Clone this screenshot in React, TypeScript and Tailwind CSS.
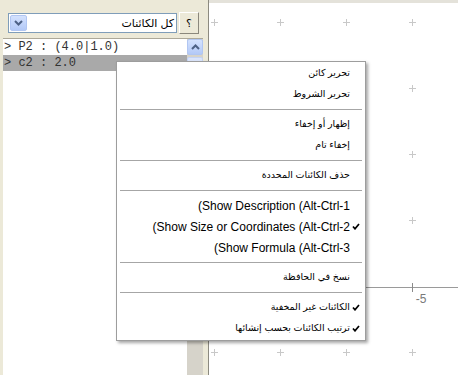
import React from 'react'

type Entry =
  | { kind: 'item'; label: string; check?: boolean; ar?: boolean }
  | { kind: 'sep' }

const menu: Entry[] = [
  { kind: 'item', label: 'تحرير كائن', ar: true },
  { kind: 'item', label: 'تحرير الشروط', ar: true },
  { kind: 'sep' },
  { kind: 'item', label: 'إظهار أو إخفاء', ar: true },
  { kind: 'item', label: 'إخفاء تام', ar: true },
  { kind: 'sep' },
  { kind: 'item', label: 'حذف الكائنات المحددة', ar: true },
  { kind: 'sep' },
  { kind: 'item', label: '(Show Description (Alt-Ctrl-1' },
  { kind: 'item', label: '(Show Size or Coordinates (Alt-Ctrl-2', check: true },
  { kind: 'item', label: '(Show Formula (Alt-Ctrl-3' },
  { kind: 'sep' },
  { kind: 'item', label: 'نسخ في الحافظة', ar: true },
  { kind: 'sep' },
  { kind: 'item', label: 'الكائنات غير المخفية', ar: true, check: true },
  { kind: 'item', label: 'ترتيب الكائنات بحسب إنشائها', ar: true, check: true },
]

const gridX = [5, 71, 137, 203]
const gridY = [19, 85, 151, 217, 349]

function Check() {
  return (
    <svg width="8" height="7" viewBox="0 0 8 7">
      <path d="M1 3.5 L3 5.8 L7 1" fill="none" stroke="#000" strokeWidth="1.7" />
    </svg>
  )
}

function Chevron({ up }: { up?: boolean }) {
  return (
    <svg width="9" height="6" viewBox="0 0 9 6">
      <path
        d={up ? 'M1 5 L4.5 1.5 L8 5' : 'M1 1 L4.5 4.5 L8 1'}
        fill="none"
        stroke="#4d6185"
        strokeWidth="2"
      />
    </svg>
  )
}

export default function App() {
  return (
    <div className="relative flex h-[375px] w-[458px] overflow-hidden bg-white font-['Liberation_Sans','DejaVu_Sans',sans-serif] text-black">
      {/* algebra view */}
      <div className="flex w-[203px] flex-col bg-[#ece9d8]">
        <div className="flex h-[38px] items-start gap-[2px] pl-[8px] pt-[12px]">
          <div className="mt-[1px] flex h-[20px] w-[169px] items-center border border-[#7f9db9] bg-white">
            <div className="ml-[1px] flex h-[16px] w-[17px] items-center justify-center rounded-[2px] border border-[#b1c6f2] bg-gradient-to-b from-[#d4e2fe] to-[#b3c9f7]">
              <Chevron />
            </div>
            <span dir="rtl" className="ml-auto pr-[2px] text-[11px] leading-none">
              كل الكائنات
            </span>
          </div>
          <div className="flex h-[22px] w-[20px] items-center justify-center border border-[#8a877c] border-l-white border-t-white bg-[#ece9d8] text-[11px]">
            ؟
          </div>
        </div>
        <div className="ml-[3px] flex flex-1 border-t border-[#aca899] bg-white">
          <div className="flex-1 font-['Liberation_Mono',monospace] text-[12px] leading-[16px] text-[#333]">
            <div className="h-[16px] pl-[1px]">&gt; P2 : (4.0|1.0)</div>
            <div className="h-[16px] bg-[#a9a9a9] pl-[1px]">&gt; c2 : 2.0</div>
          </div>
          <div className="flex w-[16px] flex-col bg-[#d6d3ca]">
            <div className="flex h-[16px] items-center justify-center rounded-[2px] border border-[#b1c6f2] bg-gradient-to-b from-[#d4e2fe] to-[#b3c9f7]">
              <Chevron up />
            </div>
            <div className="mt-[2px] h-[40px] rounded-[2px] border border-[#c3d3f5] bg-[#dbe5fb]" />
          </div>
        </div>
      </div>

      {/* splitter */}
      <div className="w-[6px] border-r border-[#8c8a80] bg-[#ece9d8]" />

      {/* graphics view */}
      <div className="flex-1 border-t-[3px] border-[#e4e2da]">
        <svg width="249" height="372" className="block">
          {gridX.map((x) =>
            gridY.map((y) => (
              <g key={`${x}-${y}`} stroke="#c8c8c8" strokeWidth="1">
                <line x1={x - 3} y1={y + 0.5} x2={x + 4} y2={y + 0.5} />
                <line x1={x + 0.5} y1={y - 3} x2={x + 0.5} y2={y + 4} />
              </g>
            ))
          )}
          <line x1="0" y1="284.5" x2="249" y2="284.5" stroke="#9a9a9a" strokeWidth="1" />
          <line x1="203.5" y1="280" x2="203.5" y2="289" stroke="#8a8a8a" strokeWidth="1" />
          <text x="212" y="300" fontSize="12" fill="#7a7a7a" textAnchor="middle" fontFamily="Liberation Sans, sans-serif">
            -5
          </text>
        </svg>
      </div>

      {/* context menu */}
      <div className="absolute left-[116px] top-[61px] w-[250px] border border-[#9d9d9d] bg-white py-[1px] shadow-[2px_2px_3px_rgba(0,0,0,0.35)]">
        {menu.map((e, i) =>
          e.kind === 'sep' ? (
            <div key={i} className="flex h-[9px] items-center px-[3px]">
              <div className="h-px w-full bg-[#a6a6a6]" />
            </div>
          ) : (
            <div key={i} className="flex h-[21px] items-center justify-end">
              <span dir={e.ar ? 'rtl' : 'ltr'} className={e.ar ? 'text-[9.5px]' : 'text-[12px]'}>
                {e.label}
              </span>
              <span className="flex w-[15px] items-center pl-[2px]">{e.check && <Check />}</span>
            </div>
          )
        )}
      </div>
    </div>
  )
}
